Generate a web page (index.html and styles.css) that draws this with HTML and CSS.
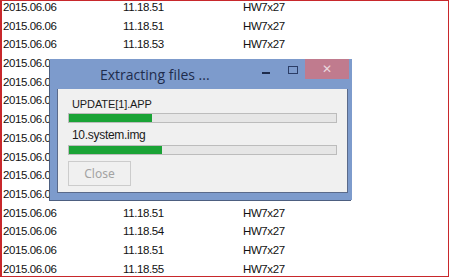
FILE: index.html
```html
<!DOCTYPE html>
<html lang="en">
<head>
    <meta charset="UTF-8">
    <title>Extracting files</title>
    <link rel="stylesheet" href="styles.css">
</head>
<body>
    <div class="frame">
        <div class="list">
            <div class="row"><span>2015.06.06</span><span>11.18.51</span><span>HW7x27</span></div>
            <div class="row"><span>2015.06.06</span><span>11.18.51</span><span>HW7x27</span></div>
            <div class="row"><span>2015.06.06</span><span>11.18.53</span><span>HW7x27</span></div>
            <div class="row"><span>2015.06.06</span><span>11.18.53</span><span>HW7x27</span></div>
            <div class="row"><span>2015.06.06</span><span>11.18.53</span><span>HW7x27</span></div>
            <div class="row"><span>2015.06.06</span><span>11.18.53</span><span>HW7x27</span></div>
            <div class="row"><span>2015.06.06</span><span>11.18.53</span><span>HW7x27</span></div>
            <div class="row"><span>2015.06.06</span><span>11.18.53</span><span>HW7x27</span></div>
            <div class="row"><span>2015.06.06</span><span>11.18.53</span><span>HW7x27</span></div>
            <div class="row"><span>2015.06.06</span><span>11.18.53</span><span>HW7x27</span></div>
            <div class="row"><span>2015.06.06</span><span>11.18.53</span><span>HW7x27</span></div>
            <div class="row"><span>2015.06.06</span><span>11.18.51</span><span>HW7x27</span></div>
            <div class="row"><span>2015.06.06</span><span>11.18.54</span><span>HW7x27</span></div>
            <div class="row"><span>2015.06.06</span><span>11.18.51</span><span>HW7x27</span></div>
            <div class="row"><span>2015.06.06</span><span>11.18.55</span><span>HW7x27</span></div>
        </div>

        <!-- ventana de progreso encima de la lista -->
        <div class="dialog">
            <div class="titlebar">
                <span class="title">Extracting files ...</span>
                <span class="btn-min"></span>
                <span class="btn-max"></span>
                <span class="btn-close">&#x2715;</span>
            </div>
            <div class="panel">
                <p class="file">UPDATE[1].APP</p>
                <div class="bar"><div class="fill" style="width: 31%"></div></div>
                <p class="file small">10.system.img</p>
                <div class="bar"><div class="fill" style="width: 35%"></div></div>
                <button class="close" disabled>Close</button>
            </div>
        </div>
    </div>
</body>
</html>
```

FILE: styles.css
```css
body {
    margin: 0;
    background-color: #ffffff;
    font-family: "Liberation Sans", Arial, sans-serif;
}
.frame {
    position: relative;
    width: 446px;
    height: 275px;
    border: 1px solid #c8282c;
    border-left-width: 2px;
    overflow: hidden;
}
.list {
    margin-top: -3px;
}
.row {
    display: grid;
    grid-template-columns: 120px 120px 1fr;
    height: 18.7px;
    line-height: 18.7px;
    font-size: 11.5px;
    letter-spacing: -0.4px;
    color: #111111;
    padding-left: 1px;
}
.dialog {
    position: absolute;
    left: 48px;
    top: 58px;
    width: 302px;
    height: 141px;
    background-color: #7d9bcc;
    box-shadow: -1px 1px 0 #4d5f80;
    display: flex;
    flex-direction: column;
}
.titlebar {
    height: 30px;
    display: flex;
    align-items: flex-start;
}
.title {
    flex: 1;
    white-space: nowrap;
    margin-left: 50px;
    margin-top: 6px;
    font-family: "Open Sans", sans-serif;
    font-size: 14px;
    color: #1e2c4c;
}
.btn-min {
    width: 8px;
    height: 2px;
    background-color: #1e2c4c;
    margin-top: 13px;
}
.btn-max {
    width: 8px;
    height: 6px;
    border: 1px solid #2b3d66;
    margin-left: 18px;
    margin-top: 7px;
}
.btn-close {
    width: 44px;
    height: 20px;
    line-height: 20px;
    text-align: center;
    background-color: #c07b8e;
    color: #ead7de;
    font-size: 12px;
    margin-left: 7px;
    margin-right: 3px;
}
.panel {
    margin: 0 4px 7px 7px;
    flex: 1;
    background-color: #f0f0f0;
    border: 1px solid #5a6a8a;
    border-top: none;
    padding: 9px 10px 0 10px;
}
.file {
    margin: 0 0 3px 4px;
    font-size: 11px;
    letter-spacing: -0.1px;
    color: #1a1a1a;
}
.file.small {
    font-size: 12px;
    letter-spacing: -0.3px;
    margin-top: 5px;
    margin-bottom: 3px;
}
.bar {
    height: 8px;
    background-color: #e6e6e6;
    border: 1px solid #bcbcbc;
}
.fill {
    height: 100%;
    background-color: #1aa336;
}
.close {
    margin-top: 6px;
    width: 63px;
    height: 25px;
    background-color: #f0f0f0;
    border: 1px solid #cccccc;
    color: #a3a3a3;
    font-family: "Noto Sans", sans-serif;
    font-size: 12px;
}
```
